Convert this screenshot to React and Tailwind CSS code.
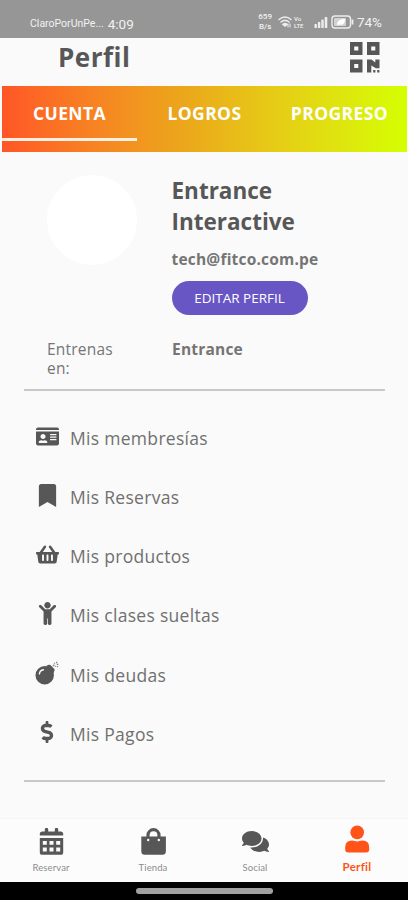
import {
  FaBookmark,
  FaChild,
  FaComments,
  FaDollarSign,
  FaIdCard,
  FaShoppingBasket
} from 'react-icons/fa';

const TABS = [
  { label: 'CUENTA', active: true },
  { label: 'LOGROS' },
  { label: 'PROGRESO' }
];

const MENU_ITEMS = [
  { label: 'Mis membresías', icon: FaIdCard, size: 23 },
  { label: 'Mis Reservas', icon: FaBookmark, size: 23 },
  { label: 'Mis productos', icon: FaShoppingBasket, size: 23 },
  { label: 'Mis clases sueltas', icon: FaChild, size: 23 },
  { label: 'Mis deudas', icon: BombIcon, size: 24 },
  { label: 'Mis Pagos', icon: FaDollarSign, size: 22, bold: true }
];

const NAV_ITEMS = [
  { label: 'Reservar', icon: CalendarIcon },
  { label: 'Tienda', icon: BagIcon },
  { label: 'Social', icon: FaComments },
  { label: 'Perfil', icon: UserIcon, active: true }
];

function QrIcon({ className }) {
  return (
    <svg className={className} viewBox="0 0 30 31" fill="currentColor">
      <path
        fillRule="evenodd"
        d="M0 0h12.5v13H0zM4.2 4.4v4.2h4.1V4.4zM17 0h12.5v13H17zM21.2 4.4v4.2h4.1V4.4zM0 17.5h12.5v13H0zM4.2 21.9v4.2h4.1v-4.2z"
      />
      <path d="M17 17.5h4.5l3.8 3v-3h4.2v8.7h-3.6l-4.6-2.8v7.1H17z" />
      <path d="M23.2 28h2.2v2.4h-2.2zM27.2 28h2.2v2.4h-2.2z" />
    </svg>
  );
}

function BombIcon({ size }) {
  return (
    <svg width={size} height={size} viewBox="0 0 24 24" fill="currentColor">
      <circle cx="9.7" cy="14.3" r="9.2" />
      <path d="M11 5l2.6-1.2q1-.4 1.8.3l3.7 3.7q.8.8.4 1.8L18 13z" />
      <path d="M4.4 12.8c.3-2.3 1.8-3.6 4-4" fill="none" stroke="#fafafa" strokeWidth="1.5" strokeLinecap="round" />
      <path
        d="M17.8 5.2l1.6-1.6M19.2 1.8l.6.9M21.6.7v1.5M23.4 3.4h-1.6M22 5.2l.8.9M20.4 4.8v1"
        stroke="currentColor"
        strokeWidth="1.2"
        opacity=".7"
      />
    </svg>
  );
}

function CalendarIcon({ size }) {
  return (
    <svg width={size} height={size} viewBox="0 0 27 27" fill="currentColor">
      <path d="M1.8 7.6V6q0-2.6 2.6-2.6h2.4V1.2Q6.8 0 8 0h1q1.2 0 1.2 1.2v2.2h6.6V1.2Q16.8 0 18 0h1q1.2 0 1.2 1.2v2.2h2.4q2.6 0 2.6 2.6v1.6z" />
      <path
        fillRule="evenodd"
        d="M1.8 10h23.4v14.2q0 2.6-2.6 2.6H4.4q-2.6 0-2.6-2.6zM4.8 13v3.8h4V13zM11.5 13v3.8h4V13zM18.2 13v3.8h4V13zM4.8 19.6v3.8h4v-3.8zM11.5 19.6v3.8h4v-3.8zM18.2 19.6v3.8h4v-3.8z"
      />
    </svg>
  );
}

function BagIcon({ size }) {
  return (
    <svg width={size} height={size} viewBox="0 0 27 27">
      <path d="M1.3 8.6h24.6v14.6q0 3.6-3.6 3.6H4.9q-3.6 0-3.6-3.6z" fill="currentColor" />
      <path d="M8 12V7.2a5.5 5.5 0 0 1 11 0V12" fill="none" stroke="currentColor" strokeWidth="3.2" />
      <circle cx="8.2" cy="12" r="1.2" fill="#fcfcfc" />
      <circle cx="18.8" cy="12" r="1.2" fill="#fcfcfc" />
    </svg>
  );
}

function UserIcon({ size }) {
  return (
    <svg width={size} height={size} viewBox="0 0 28 28" fill="currentColor">
      <circle cx="14.2" cy="7.4" r="6.8" />
      <path d="M2.2 24.5v-2.3q0-6.6 6.8-6.6 1.5 0 2.8.5 2.4.6 4.8 0 1.3-.5 2.8-.5 6.8 0 6.8 6.6v2.3q0 3-3 3h-18q-3 0-3-3z" />
    </svg>
  );
}

function StatusIcons() {
  return (
    <svg width="76" height="16" viewBox="0 0 76 16" fill="none" stroke="#ededed">
      {/* wifi */}
      <g strokeWidth="1.6" strokeLinecap="round">
        <path d="M1 5.5Q7 .5 13 5.5" />
        <path d="M3 8Q7 4.8 11 8" />
        <path d="M5 10.3Q7 9 9 10.3L7 12Z" fill="#ededed" />
        <path d="M10 10v3M12 10v3" strokeWidth="1" />
      </g>
      {/* signal */}
      <g fill="#ededed" stroke="none">
        <rect x="36.5" y="10" width="2.4" height="4" rx=".5" />
        <rect x="39.9" y="8" width="2.4" height="6" rx=".5" />
        <rect x="43.3" y="5.5" width="2.4" height="8.5" rx=".5" />
        <rect x="46.7" y="3" width="2.6" height="11" rx=".5" />
      </g>
      {/* battery */}
      <rect x="54" y="2" width="18.5" height="12" rx="3" strokeWidth="1.4" />
      <rect x="56" y="4" width="12" height="8" rx="1" fill="#d2d2d2" stroke="none" />
      <path d="M59 11.5c0-5 3-6.5 8-6.5 0 4.5-2 6.5-6 5.5z" fill="#fff" stroke="none" />
      <path d="M74.5 5.5v5" strokeWidth="1.8" />
    </svg>
  );
}

function StatusBar() {
  return (
    <div className="flex h-[38px] shrink-0 items-end justify-between bg-[#969696] pr-[26px] pb-[6px] pl-[30px] text-[#f2f2f2]">
      <div className="flex items-center gap-1 leading-4">
        <span className="font-[Roboto,sans-serif] text-[10.5px]">ClaroPorUnPe...</span>
        <span className="font-[Roboto,sans-serif] text-[13.5px]">4:09</span>
      </div>
      <div className="flex items-center leading-4">
        <div className="mr-[6px] text-center font-[Roboto,sans-serif] text-[8px] leading-[10px] font-medium">
          <div>659</div>
          <div>B/s</div>
        </div>
        <div className="relative flex">
          <StatusIcons />
          <div className="absolute top-px left-[16px] font-[Roboto,sans-serif] text-[6px] leading-[7px] font-medium">
            <div>Vo</div>
            <div>LTE</div>
          </div>
        </div>
        <span className="ml-[3px] font-[Roboto,sans-serif] text-[13.5px]">74%</span>
      </div>
    </div>
  );
}

function Header() {
  return (
    <header className="flex h-12 shrink-0 items-start justify-between pr-[28px] pl-[58px]">
      <h1 className="mt-px text-[26px] leading-9 font-bold tracking-[0.5px]">Perfil</h1>
      <QrIcon className="mt-[4px] h-[31px] w-[30px]" />
    </header>
  );
}

function Tabs() {
  return (
    <nav className="ml-[2px] flex h-[66px] w-[405px] shrink-0 bg-linear-to-r from-[#ff5526] via-[#eba71b] via-45% to-[#d4ff00]">
      {TABS.map((tab) => (
        <div key={tab.label} className="flex w-[135px] shrink-0 flex-col">
          <div className="flex h-[52px] items-center justify-center pt-[3px] text-[17.5px] font-bold tracking-[0.4px] text-white">
            {tab.label}
          </div>
          {tab.active && <div className="h-[3px] bg-[#fff0e6]" />}
        </div>
      ))}
    </nav>
  );
}

function ProfileCard() {
  return (
    <section className="mr-[23px] ml-6 h-[239px] shrink-0 border-b-2 border-[#c8c8c8] pl-[23px]">
      <div className="flex pt-[23px]">
        <div className="mr-[34.5px] size-[90px] shrink-0 rounded-full bg-white" />
        <div>
          <h2 className="w-[150px] text-[22.5px] leading-[31px] font-bold">Entrance Interactive</h2>
          <p className="mt-[12px] text-[15.5px] leading-5 font-bold tracking-[0.2px] text-[#757575]">tech@fitco.com.pe</p>
          <button className="mt-[12px] h-[34px] w-[136px] rounded-full bg-[#6956c5] text-[13.5px] text-white">
            EDITAR PERFIL
          </button>
        </div>
      </div>
      <div className="mt-[25px] flex text-[15.5px] leading-[18.5px] text-[#757575]">
        <span className="w-[125px] pr-10 tracking-[0.2px]">Entrenas en:</span>
        <span className="font-bold tracking-[0.2px]">Entrance</span>
      </div>
    </section>
  );
}

function Menu() {
  return (
    <ul className="mr-[23px] ml-6 h-[391px] shrink-0 border-b-2 border-[#c8c8c8] pt-[17px]">
      {MENU_ITEMS.map(({ label, icon: Icon, size, bold }) => (
        <li key={label} className="flex h-[59.25px] items-center pl-[10px]">
          <span className={bold ? 'mb-[3px] flex w-[26px] justify-center stroke-current stroke-[14px]' : 'mb-[3px] flex w-[26px] justify-center'}>
            <Icon size={size} />
          </span>
          <span className="ml-[10px] text-[17.5px] tracking-[0.3px] text-[#707070]">{label}</span>
        </li>
      ))}
    </ul>
  );
}

function BottomNav() {
  return (
    <nav className="mt-auto flex h-[64px] shrink-0 border-t border-[#f5f5f5] bg-[#fcfcfc]">
      {NAV_ITEMS.map(({ label, icon: Icon, active }) =>
        active ? (
          <div key={label} className="flex w-[102px] flex-col items-center pt-[6px] text-[#ff5318]">
            <Icon size={28} />
            <span className="mt-[8px] font-[Lato,sans-serif] text-[11.5px] leading-3 font-bold tracking-[0.3px]">{label}</span>
          </div>
        ) : (
          <div key={label} className="flex w-[102px] flex-col items-center pt-[9px]">
            <Icon size={27} />
            <span className="mt-[7px] font-[Lato,sans-serif] text-[9.5px] leading-3 tracking-[0.1px] text-[#8c8c8c]">{label}</span>
          </div>
        )
      )}
    </nav>
  );
}

export default function App() {
  return (
    <div className="flex h-[900px] w-[408px] flex-col overflow-hidden bg-[#fafafa] font-['Open_Sans',sans-serif] text-[#575757]">
      <StatusBar />
      <Header />
      <Tabs />
      <ProfileCard />
      <Menu />
      <BottomNav />
      {/* System gesture bar */}
      <div className="flex h-[18px] shrink-0 justify-center bg-black pt-[6px]">
        <div className="h-[6px] w-[137px] rounded-full bg-[#a0a0a0]" />
      </div>
    </div>
  );
}
